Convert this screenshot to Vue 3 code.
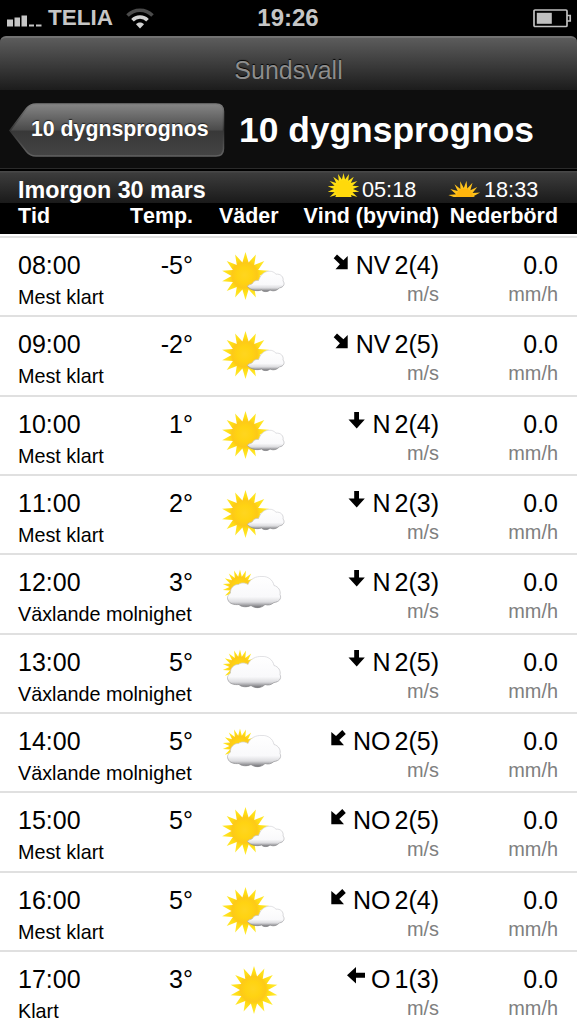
<template>
    <div class="screen">
        <!-- Shared gradients -->
        <svg class="defs" width="0" height="0" aria-hidden="true">
            <defs>
                <radialGradient id="sunFill" cx="48%" cy="48%" r="52%">
                    <stop offset="0" stop-color="#ffd520" />
                    <stop offset="0.3" stop-color="#ffd312" />
                    <stop offset="0.52" stop-color="#fdc918" />
                    <stop offset="0.64" stop-color="#ffdc12" />
                    <stop offset="1" stop-color="#ffec35" />
                </radialGradient>
                <linearGradient id="cloudFill" x1="0" y1="0" x2="0" y2="1">
                    <stop offset="0" stop-color="#ffffff" />
                    <stop offset="0.65" stop-color="#f9f9fb" />
                    <stop offset="0.82" stop-color="#dcdcdf" />
                    <stop offset="1" stop-color="#6f6f73" />
                </linearGradient>
                <linearGradient id="cloudEdge" x1="0" y1="0" x2="0" y2="1">
                    <stop offset="0" stop-color="#d6d6da" />
                    <stop offset="0.6" stop-color="#bdbdc1" />
                    <stop offset="1" stop-color="#77777a" />
                </linearGradient>
                <linearGradient id="backFill" x1="0" y1="0" x2="0" y2="1">
                    <stop offset="0" stop-color="#858585" />
                    <stop offset="0.5" stop-color="#4b4b4b" />
                    <stop offset="0.52" stop-color="#383838" />
                    <stop offset="1" stop-color="#444444" />
                </linearGradient>
                <linearGradient id="backEdge" x1="0" y1="0" x2="0" y2="1">
                    <stop offset="0" stop-color="#7c7c7c" />
                    <stop offset="0.5" stop-color="#333333" />
                    <stop offset="1" stop-color="#626262" />
                </linearGradient>
            </defs>
        </svg>

        <header class="status-bar">
            <div class="carrier">
                <svg class="signal" width="35" height="12" viewBox="0 0 35 12">
                    <path d="M0 4.500h6V11.500H0zM7.500 2.500h5.500v9H7.500zM14.500 .5h5.500v11h-5.500zM22 9.500h5v2h-5zM29 9.500h5.500v2H29z" />
                </svg>
                <span>TELIA</span>
                <svg class="wifi" width="28" height="21" viewBox="0 0 28 21">
                    <path class="wifi-weak" d="M1.500 7.500C8.500 .5 19.500 .5 26.500 7.500" />
                    <path d="M6.500 12.200C10.500 8 17.500 8 21.500 12.200" />
                    <path class="wifi-dot" d="M14 20.500l-4-4.200c2-2.400 6-2.400 8 0z" />
                </svg>
            </div>
            <span class="clock">19:26</span>
            <svg class="battery" width="39" height="19" viewBox="0 0 39 19">
                <rect x="1" y="1" width="33" height="16.500" rx="1" />
                <path d="M34 6.500h3.200v5.500H34" />
                <rect class="battery-level" x="3.800" y="3.800" width="15" height="11" />
            </svg>
        </header>

        <div class="city-bar">Sundsvall</div>

        <nav class="nav-bar">
            <button class="back">
                <svg width="216" height="55" viewBox="0 0 216 55">
                    <path
                        d="M1 27.500L17.500 5.500Q21 1 27 1H207Q214.500 1 214.500 8.500V45.500Q214.500 53 207 53H27Q21 53 17.500 48.500Z" />
                </svg>
                <span>10 dygnsprognos</span>
            </button>
            <h1>10 dygnsprognos</h1>
        </nav>

        <section class="day-bar">
            <span class="day">Imorgon 30 mars</span>
            <svg class="rise" width="33" height="24" viewBox="0 0 33 24">
                <polygon :points="star(16.5, 16, 16, 9.5, 18)" fill="#ffe013" />
                <circle cx="16.5" cy="16" r="9" fill="#ffd90b" />
            </svg>
            <span class="sun-time rise-time">05:18</span>
            <svg class="set" width="33" height="17" viewBox="0 0 33 17">
                <polygon :points="star(16.5, 17, 16.3, 9, 16, 7)" fill="#ffc21c" />
                <circle cx="16.5" cy="17" r="8.500" fill="#ffb40c" />
            </svg>
            <span class="sun-time">18:33</span>
        </section>

        <div class="columns head">
            <div class="head-time">
                <span>Tid</span>
                <span>Temp.</span>
            </div>
            <div class="head-weather">Väder</div>
            <div class="head-right">Vind (byvind)</div>
            <div class="head-right">Nederbörd</div>
        </div>

        <main class="list">
            <div v-for="row in rows" :key="row.time" class="columns row">
                <div>
                    <div class="main-line">
                        <span>{{ row.time }}</span>
                        <span>{{ row.temp }}°</span>
                    </div>
                    <div class="description">{{ descriptions[row.weather] }}</div>
                </div>

                <svg class="weather" width="70" height="60" viewBox="0 0 70 60">
                    <template v-if="row.weather === 'cloudy'">
                        <polygon :points="star(21, 24, 17.5, 10.5, 18)" fill="url(#sunFill)" />
                        <path class="cloud" :d="bigCloud" />
                    </template>
                    <template v-else>
                        <polygon :points="star(row.weather === 'clear' ? 35 : 26.5, 30, 24, 14, 14)"
                            fill="url(#sunFill)" />
                        <path v-if="row.weather === 'mostly'" class="cloud" :d="smallCloud" />
                    </template>
                </svg>

                <div class="values">
                    <div class="wind">
                        <svg width="18" height="18" viewBox="0 0 18 18">
                            <path :d="arrows[row.dir]" />
                        </svg>
                        <span class="dir">{{ row.dir }}</span>
                        <span>{{ row.wind }}</span>
                    </div>
                    <div class="unit">m/s</div>
                </div>

                <div class="values">
                    <div>0.0</div>
                    <div class="unit">mm/h</div>
                </div>
            </div>
        </main>
    </div>
</template>

<script setup>
const rows = [
    { time: '08:00', temp: '-5', weather: 'mostly', dir: 'NV', wind: '2(4)' },
    { time: '09:00', temp: '-2', weather: 'mostly', dir: 'NV', wind: '2(5)' },
    { time: '10:00', temp: '1', weather: 'mostly', dir: 'N', wind: '2(4)' },
    { time: '11:00', temp: '2', weather: 'mostly', dir: 'N', wind: '2(3)' },
    { time: '12:00', temp: '3', weather: 'cloudy', dir: 'N', wind: '2(3)' },
    { time: '13:00', temp: '5', weather: 'cloudy', dir: 'N', wind: '2(5)' },
    { time: '14:00', temp: '5', weather: 'cloudy', dir: 'NO', wind: '2(5)' },
    { time: '15:00', temp: '5', weather: 'mostly', dir: 'NO', wind: '2(5)' },
    { time: '16:00', temp: '5', weather: 'mostly', dir: 'NO', wind: '2(4)' },
    { time: '17:00', temp: '3', weather: 'clear', dir: 'O', wind: '1(3)' }
]

const descriptions = {
    mostly: 'Mest klart',
    cloudy: 'Växlande molnighet',
    clear: 'Klart'
}

const arrows = {
    N: 'M6.200 0h4.800v7.500h5.800L8.700 16.500.5 7.500h5.700z',
    NV: 'M5 1.500L11.400 7.200 15.700 3V16.200H3.500L7.900 11.300 1.700 5.300z',
    NO: 'M13.300 1L7 7 2.300 3V16.200H15L10.300 11 16.800 5z',
    O: 'M0 8.200L9 0V5.700H18V10.700H9V16.500z'
}

const smallCloud = 'M28.500 40.500C29 38.500 31.500 39 33.500 37.500C34.500 35 37 34 39.500 34.500C41 30.500 44 25.500 50 25.300C53 24.800 55.500 26.500 57 28.200C61.500 27.500 65 31 64 35C66.500 37.500 64.500 41.500 60.500 41.800C58 44.800 54 45.500 51 44C48.500 46.200 44.500 46 42.500 44C38 45.500 32 44.500 28.500 40.500Z'

const bigCloud = 'M9 37C7.500 34 9.500 31.500 11.500 30C11 25.500 15 21 19.500 21.500C22 19.500 26 19.500 29 21.500C31 16 37 13 43 13.500C49 13 54 17 55 22.500C59.500 23.500 62 28 61 31.500C63 35.500 60 39 55 39.500C52 42 49 42.500 46 41.500C42 45.500 36 45.500 32 42.500C28 44.500 22 44 20 41.500C15.500 42 10.500 41 9 37Z'

// Polygon points for a sun with pointed rays
const star = (cx, cy, outer, inner, rays, turn = 0) => {
    const points = []
    for (let i = 0; i < rays * 2; i++) {
        const angle = (Math.PI * i) / rays - Math.PI / 2 + (turn * Math.PI) / 180
        const r = i % 2 ? inner : outer
        points.push(`${(cx + r * Math.cos(angle)).toFixed(1)},${(cy + r * Math.sin(angle)).toFixed(1)}`)
    }
    return points.join(' ')
}
</script>

<style>
body {
    background: #000;
}
</style>

<style scoped>
.screen {
    height: 1024px;
    overflow: hidden;
    background: #000;
    color: #fff;
    font-family: "Liberation Sans", Arial, sans-serif;
    font-kerning: none;
}

.defs {
    position: absolute;
}

/* Status bar */
.status-bar {
    display: grid;
    grid-template-columns: 1fr auto 1fr;
    align-items: center;
    height: 36px;
    padding: 0 5px 0 7px;
    color: #c6c6c6;
    font-weight: bold;
}

.carrier {
    display: flex;
    align-items: center;
    font-size: 22.5px;
}

.signal {
    margin: 5px 6px 0 0;
    fill: #c6c6c6;
}

.wifi {
    margin: 0 0 0 13px;
    fill: none;
    stroke: #d2d2d2;
    stroke-width: 3.6;
}

.wifi .wifi-weak {
    stroke: #4b4b4b;
}

.wifi .wifi-dot {
    fill: #d2d2d2;
    stroke: none;
}

.clock {
    margin-right: 3px;
    font-size: 24px;
}

.battery {
    justify-self: end;
    fill: none;
    stroke: #c0c0c0;
    stroke-width: 1.7;
}

.battery .battery-level {
    fill: #c0c0c0;
    stroke: none;
}

/* Title bars */
.city-bar {
    height: 54px;
    box-sizing: border-box;
    border-top: 2px solid #727272;
    border-radius: 6px 6px 0 0;
    padding-top: 2px;
    background: linear-gradient(#5c5c5c, #1c1c1c);
    color: #8d8d8d;
    font-size: 25px;
    line-height: 61px;
    text-align: center;
    text-shadow: 0 -1px 1px #000;
}

.nav-bar {
    display: flex;
    height: 78px;
    background: #0e0e0e;
}

.back {
    display: grid;
    width: 216px;
    height: 55px;
    margin: 13px 0 0 9px;
    padding: 0;
    border: 0;
    background: none;
    color: #fff;
    font: bold 21.3px/52px "Liberation Sans", Arial, sans-serif;
    font-kerning: none;
    text-align: left;
    text-shadow: 0 -1px 1px #222;
}

.back svg,
.back span {
    grid-area: 1 / 1;
}

.back span {
    padding-left: 22px;
    white-space: nowrap;
}

.back path {
    fill: url(#backFill);
    stroke: url(#backEdge);
    stroke-width: 1.5;
}

h1 {
    margin: 0 0 0 14px;
    font-size: 35.4px;
    line-height: 80px;
    white-space: nowrap;
}

.day-bar {
    display: flex;
    box-sizing: border-box;
    height: 35px;
    border-top: 1px solid #2b2b2b;
    padding: 1px 0 0 18px;
    background: linear-gradient(#000 0 2px, #484848 2px 3px, #3c3c3c 4px, #1a1a1a);
    line-height: 40px;
}

.day {
    width: 309px;
    font-size: 23.3px;
    font-weight: bold;
}

.sun-time {
    font-size: 21.7px;
}

.rise {
    margin: 3px 2px 0 0;
}

.rise-time {
    width: 86px;
}

.set {
    margin: 10px 3px 0 0;
}

/* Table */
.columns {
    display: grid;
    grid-template-columns: 175px 97px 149px 119px;
    padding: 0 19px 0 18px;
}

.head {
    height: 31px;
    font-size: 21.4px;
    font-weight: bold;
    line-height: 26px;
    white-space: nowrap;
}

.head-time {
    display: flex;
    justify-content: space-between;
}

.head-weather {
    padding-left: 26px;
}

.head-right {
    text-align: right;
}

.list {
    border-top: 2px solid #fff;
    background: #fff;
    color: #000;
}

.row {
    box-sizing: border-box;
    height: 79.33px;
    border-top: 2px solid #e0e0e0;
    padding-top: 13px;
    font-size: 25px;
    line-height: 28px;
}

.main-line {
    display: flex;
    justify-content: space-between;
}

.description {
    margin-top: 7px;
    font-size: 19.8px;
    line-height: 22px;
    white-space: nowrap;
}

.weather {
    margin: -5px 0 0 26px;
}

.cloud {
    fill: url(#cloudFill);
    stroke: url(#cloudEdge);
    stroke-width: 0.7;
}

.values {
    text-align: right;
}

.wind {
    display: flex;
    justify-content: flex-end;
}

.wind svg {
    margin: 2px 6px 0 0;
}

.dir {
    margin-right: 4px;
}

.unit {
    margin-top: 4px;
    color: #808080;
    font-size: 19.9px;
    line-height: 22px;
}
</style>
